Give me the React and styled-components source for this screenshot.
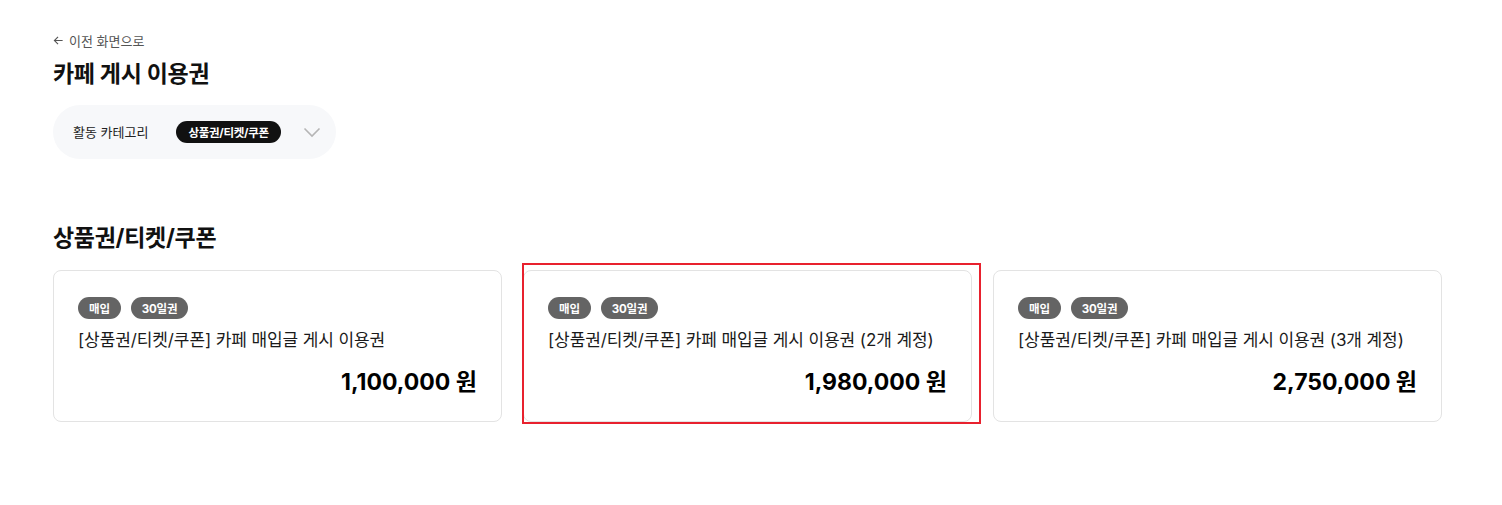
import React from 'react';
import styled, { createGlobalStyle } from 'styled-components';

const GlobalStyle = createGlobalStyle`
  body {
    margin: 0;
    background: #fff;
    font-family: Inter, "Noto Sans CJK KR", sans-serif;
    color: #111;
  }
`;

const Page = styled.div`
  padding: 30px 60px 60px 53px;
  width: 1389px;
`;

const BackLink = styled.a`
  display: inline-flex;
  align-items: center;
  gap: 5px;
  font-size: 13px;
  color: #555;
  text-decoration: none;
  height: 20px;
`;

const Title = styled.h1`
  margin: 7px 0 0;
  font-size: 23px;
  font-weight: 700;
  line-height: 32px;
  letter-spacing: -0.3px;
`;

const FilterBar = styled.div`
  margin-top: 15px;
  display: inline-flex;
  align-items: center;
  height: 54px;
  padding: 0 14px 0 20px;
  border-radius: 27px;
  background: #f7f8fa;
`;

const FilterLabel = styled.span`
  font-size: 13px;
  color: #222;
  margin-right: 28px;
`;

const Chip = styled.span`
  display: inline-flex;
  align-items: center;
  height: 22px;
  padding: 0 12px;
  border-radius: 11px;
  background: #111;
  color: #fff;
  font-size: 11.5px;
  font-weight: 700;
  letter-spacing: -0.3px;
`;

const Chevron = styled.svg`
  margin-left: 21px;
`;

const SectionTitle = styled.h2`
  margin: 63px 0 0;
  font-size: 23px;
  font-weight: 700;
  line-height: 32px;
  letter-spacing: -0.3px;
`;

const CardGrid = styled.div`
  margin-top: 16px;
  display: grid;
  grid-template-columns: repeat(3, 1fr);
  gap: 21px;
`;

const Card = styled.div`
  position: relative;
  border: 1px solid #e3e3e3;
  border-radius: 8px;
  padding: 26px 24px 28px;
  height: 152px;
  box-sizing: border-box;
  display: flex;
  flex-direction: column;
`;

const Highlight = styled.div`
  position: absolute;
  left: -2px;
  top: -8px;
  right: -10px;
  bottom: -3px;
  border: 2px solid #e8212e;
  pointer-events: none;
`;

const TagRow = styled.div`
  display: flex;
  gap: 10px;
`;

const Tag = styled.span`
  display: inline-flex;
  align-items: center;
  height: 22px;
  padding: 0 11px;
  border-radius: 11px;
  background: #646464;
  color: #fff;
  font-size: 11.5px;
  font-weight: 700;
  letter-spacing: -0.2px;
`;

const CardTitle = styled.div`
  margin-top: 9px;
  font-size: 17px;
  line-height: 24px;
  color: #1a1a1a;
  letter-spacing: -0.1px;
`;

const Price = styled.div`
  margin-top: 16px;
  text-align: right;
  font-size: 23px;
  font-weight: 700;
  line-height: 28px;
  color: #000;
`;

const products = [
  { title: '[상품권/티켓/쿠폰] 카페 매입글 게시 이용권', price: '1,100,000 원' },
  { title: '[상품권/티켓/쿠폰] 카페 매입글 게시 이용권 (2개 계정)', price: '1,980,000 원', selected: true },
  { title: '[상품권/티켓/쿠폰] 카페 매입글 게시 이용권 (3개 계정)', price: '2,750,000 원' },
];

export default function App() {
  return (
    <>
      <GlobalStyle />
      <Page>
        <BackLink href="#">
          <svg width="11" height="11" viewBox="0 0 12 12" fill="none" stroke="#555" strokeWidth="1.2">
            <path d="M10.5 6H1.5M5.5 2L1.5 6l4 4" />
          </svg>
          이전 화면으로
        </BackLink>
        <Title>카페 게시 이용권</Title>
        <FilterBar>
          <FilterLabel>활동 카테고리</FilterLabel>
          <Chip>상품권/티켓/쿠폰</Chip>
          <Chevron width="20" height="20" viewBox="0 0 20 20" fill="none" stroke="#b5b5b5" strokeWidth="1.6">
            <path d="M2.5 6.5l7.5 7.5 7.5-7.5" />
          </Chevron>
        </FilterBar>
        <SectionTitle>상품권/티켓/쿠폰</SectionTitle>
        <CardGrid>
          {products.map(p => (
            <Card key={p.price}>
              {p.selected && <Highlight />}
              <TagRow>
                <Tag>매입</Tag>
                <Tag>30일권</Tag>
              </TagRow>
              <CardTitle>{p.title}</CardTitle>
              <Price>{p.price}</Price>
            </Card>
          ))}
        </CardGrid>
      </Page>
    </>
  );
}
